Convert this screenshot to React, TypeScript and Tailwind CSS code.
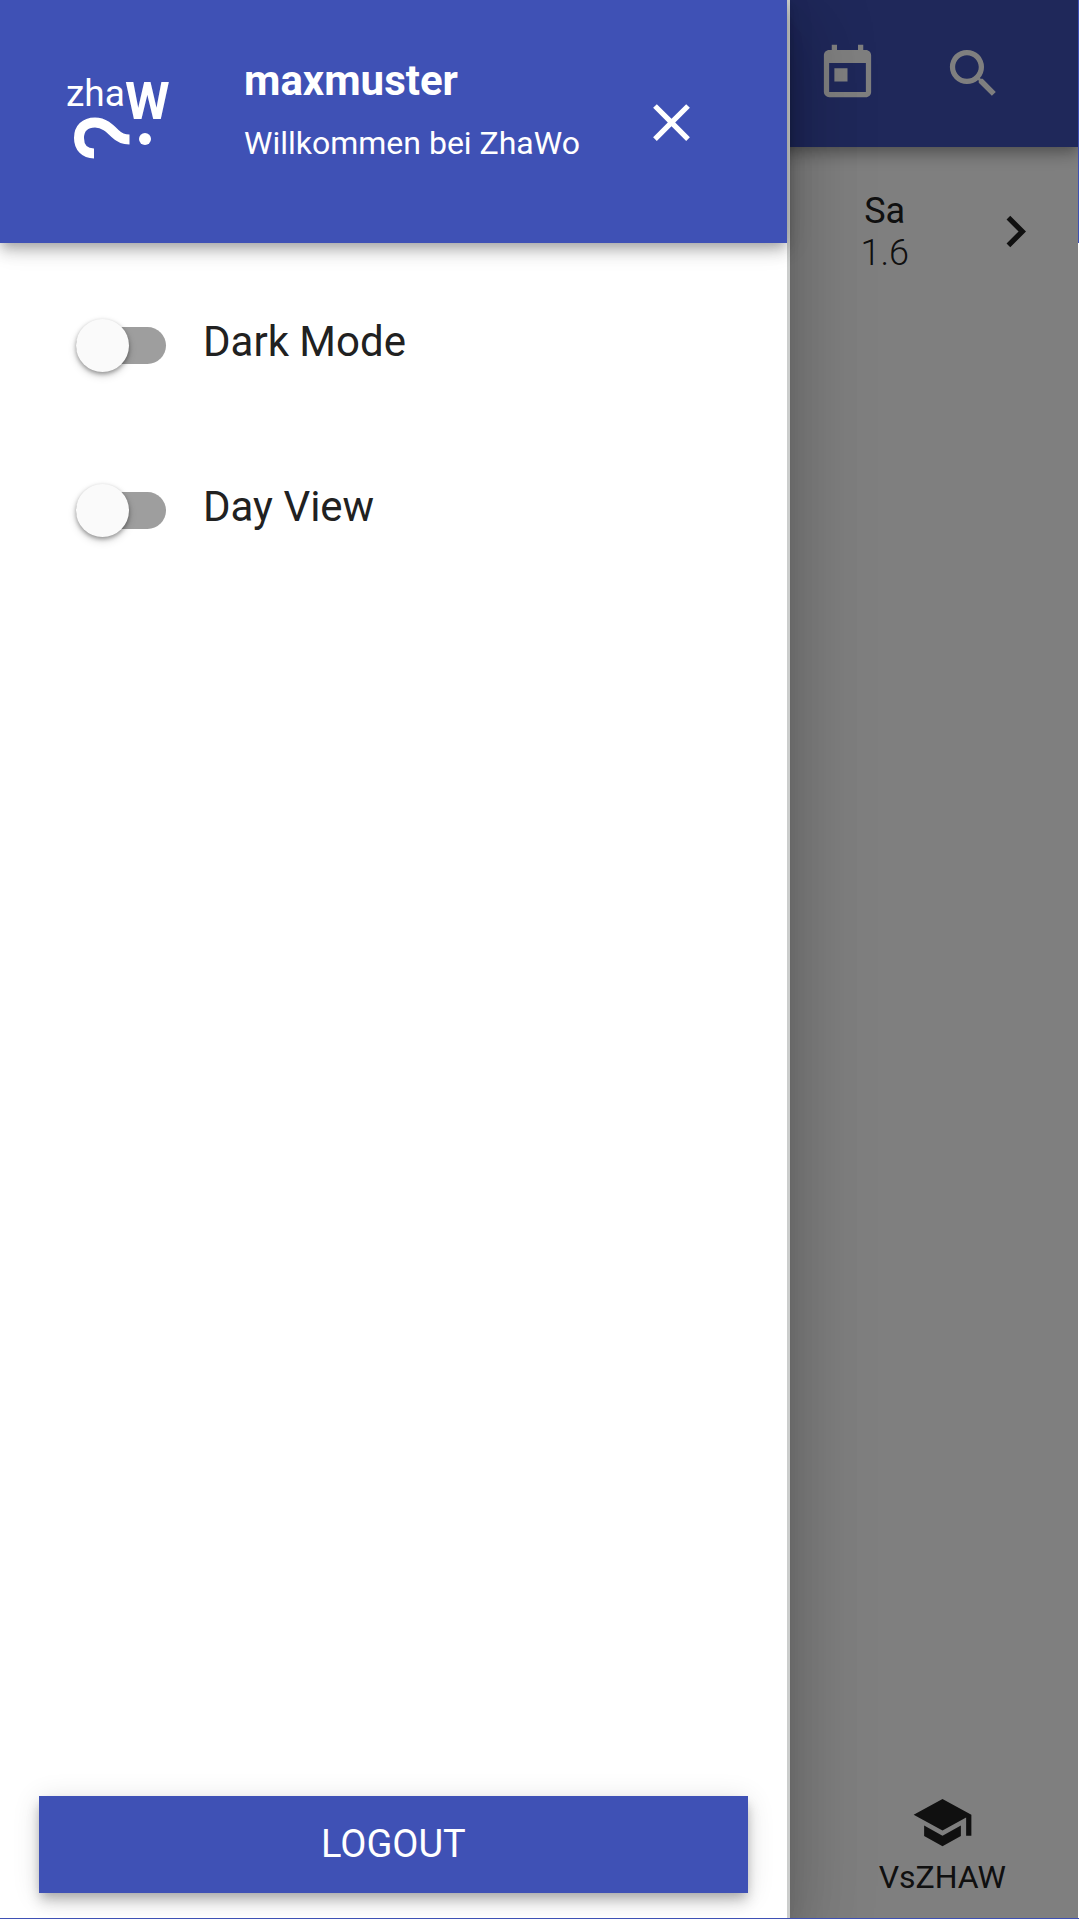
import { MdChevronRight, MdClose, MdSchool, MdSearch, MdToday } from "react-icons/md";

const elevation =
  "shadow-[0_5px_10px_-3px_rgba(0,0,0,0.2),0_10px_13px_0_rgba(0,0,0,0.14),0_3px_26px_0_rgba(0,0,0,0.12)]";

function Logo() {
  return (
    <svg viewBox="0 -20 110 110" className="size-[110px] shrink-0 text-white" role="img" aria-label="zhaW">
      <text x="0" y="30" fontSize="37" fill="currentColor">zha</text>
      <text x="59" y="43" fontSize="51" fontWeight="700" fill="currentColor">W</text>
      <path
        d="M28 77.5C19 77.5 13 71.500 13 62C13 52.500 19 46.500 29 46.500C38 46.500 43.500 52 49 57.500C53.500 62 57.500 63.500 63.500 63.500"
        fill="none"
        stroke="currentColor"
        strokeWidth="10"
      />
      <circle cx="79" cy="63" r="6" fill="currentColor" />
    </svg>
  );
}

function Toggle({ label }: { label: string }) {
  return (
    <label className="flex h-[165px] items-center gap-[37px] text-[42px] leading-[48px] text-[#212121]">
      <input
        type="checkbox"
        className="relative mt-2 h-[37px] w-[90px] shrink-0 appearance-none rounded-full bg-[#9e9e9e] before:absolute before:-top-2 before:left-0 before:size-[53px] before:rounded-full before:bg-[#fafafa] before:shadow-[0_2px_4px_rgba(0,0,0,0.35),0_4px_8px_rgba(0,0,0,0.15)] before:content-[''] checked:bg-[#9fa8da] checked:before:left-auto checked:before:right-0 checked:before:bg-[#3f51b5]"
      />
      <span>{label}</span>
    </label>
  );
}

function Drawer() {
  return (
    <aside className="absolute inset-y-0 left-0 flex w-[73.2%] flex-col border-r-[3px] border-[#cbcdcc] bg-white shadow-[0_21px_26px_-13px_rgba(0,0,0,0.2),0_42px_63px_5px_rgba(0,0,0,0.14),0_16px_79px_13px_rgba(0,0,0,0.12)]">
      <header className={`flex h-[243px] items-start bg-[#3f51b5] pt-14 pl-[66px] pr-16 text-white ${elevation}`}>
        <Logo />
        <div className="flex flex-1 flex-col gap-5 pt-px pl-[68px]">
          <h1 className="text-[42px] leading-[48px] font-bold">maxmuster</h1>
          <p className="text-[32px] leading-9 whitespace-nowrap">Willkommen bei ZhaWo</p>
        </div>
        <button type="button" aria-label="Close menu" className="mt-[35px] mr-5">
          <MdClose className="size-[63px]" />
        </button>
      </header>
      <div className="flex-1 pt-4 pl-[76px]">
        <Toggle label="Dark Mode" />
        <Toggle label="Day View" />
      </div>
      <div className="pr-[39px] pb-[25px] pl-[39px]">
        <button type="button" className={`h-[97px] w-full bg-[#3f51b5] text-[38px] text-white ${elevation}`}>
          LOGOUT
        </button>
      </div>
    </aside>
  );
}

export default function App() {
  return (
    <div className="relative flex min-h-screen flex-col overflow-hidden border-b border-[#3f51b5] bg-white font-[Roboto,sans-serif] text-[#212121]">
      <header className={`flex h-[147px] items-start justify-end gap-[63px] bg-[#3f51b5] pt-[42px] pr-[74px] text-white ${elevation}`}>
        <button type="button" aria-label="Today">
          <MdToday className="size-[63px]" />
        </button>
        <button type="button" aria-label="Search">
          <MdSearch className="size-[63px]" />
        </button>
      </header>
      <main className="flex flex-1 items-start justify-end gap-[75px] pt-[43px] pr-8">
        <div className="flex flex-col items-center text-[36px] leading-[42px]">
          <span>Sa</span>
          <span className="font-light">1.6</span>
        </div>
        <button type="button" aria-label="Next day" className="mt-[10px]">
          <MdChevronRight className="size-[63px]" />
        </button>
      </main>
      <nav className="flex justify-end pr-[73px] pb-5">
        <a href="#vszhaw" className="flex flex-col items-center gap-0.5 text-[32px] leading-[42px]">
          <MdSchool className="size-[63px]" />
          VsZHAW
        </a>
      </nav>
      <div className="absolute inset-y-0 right-px left-0 bg-black/50" />
      <div className="absolute top-0 right-0 h-[243px] w-px bg-[#3f51b5]" />
      <Drawer />
    </div>
  );
}
